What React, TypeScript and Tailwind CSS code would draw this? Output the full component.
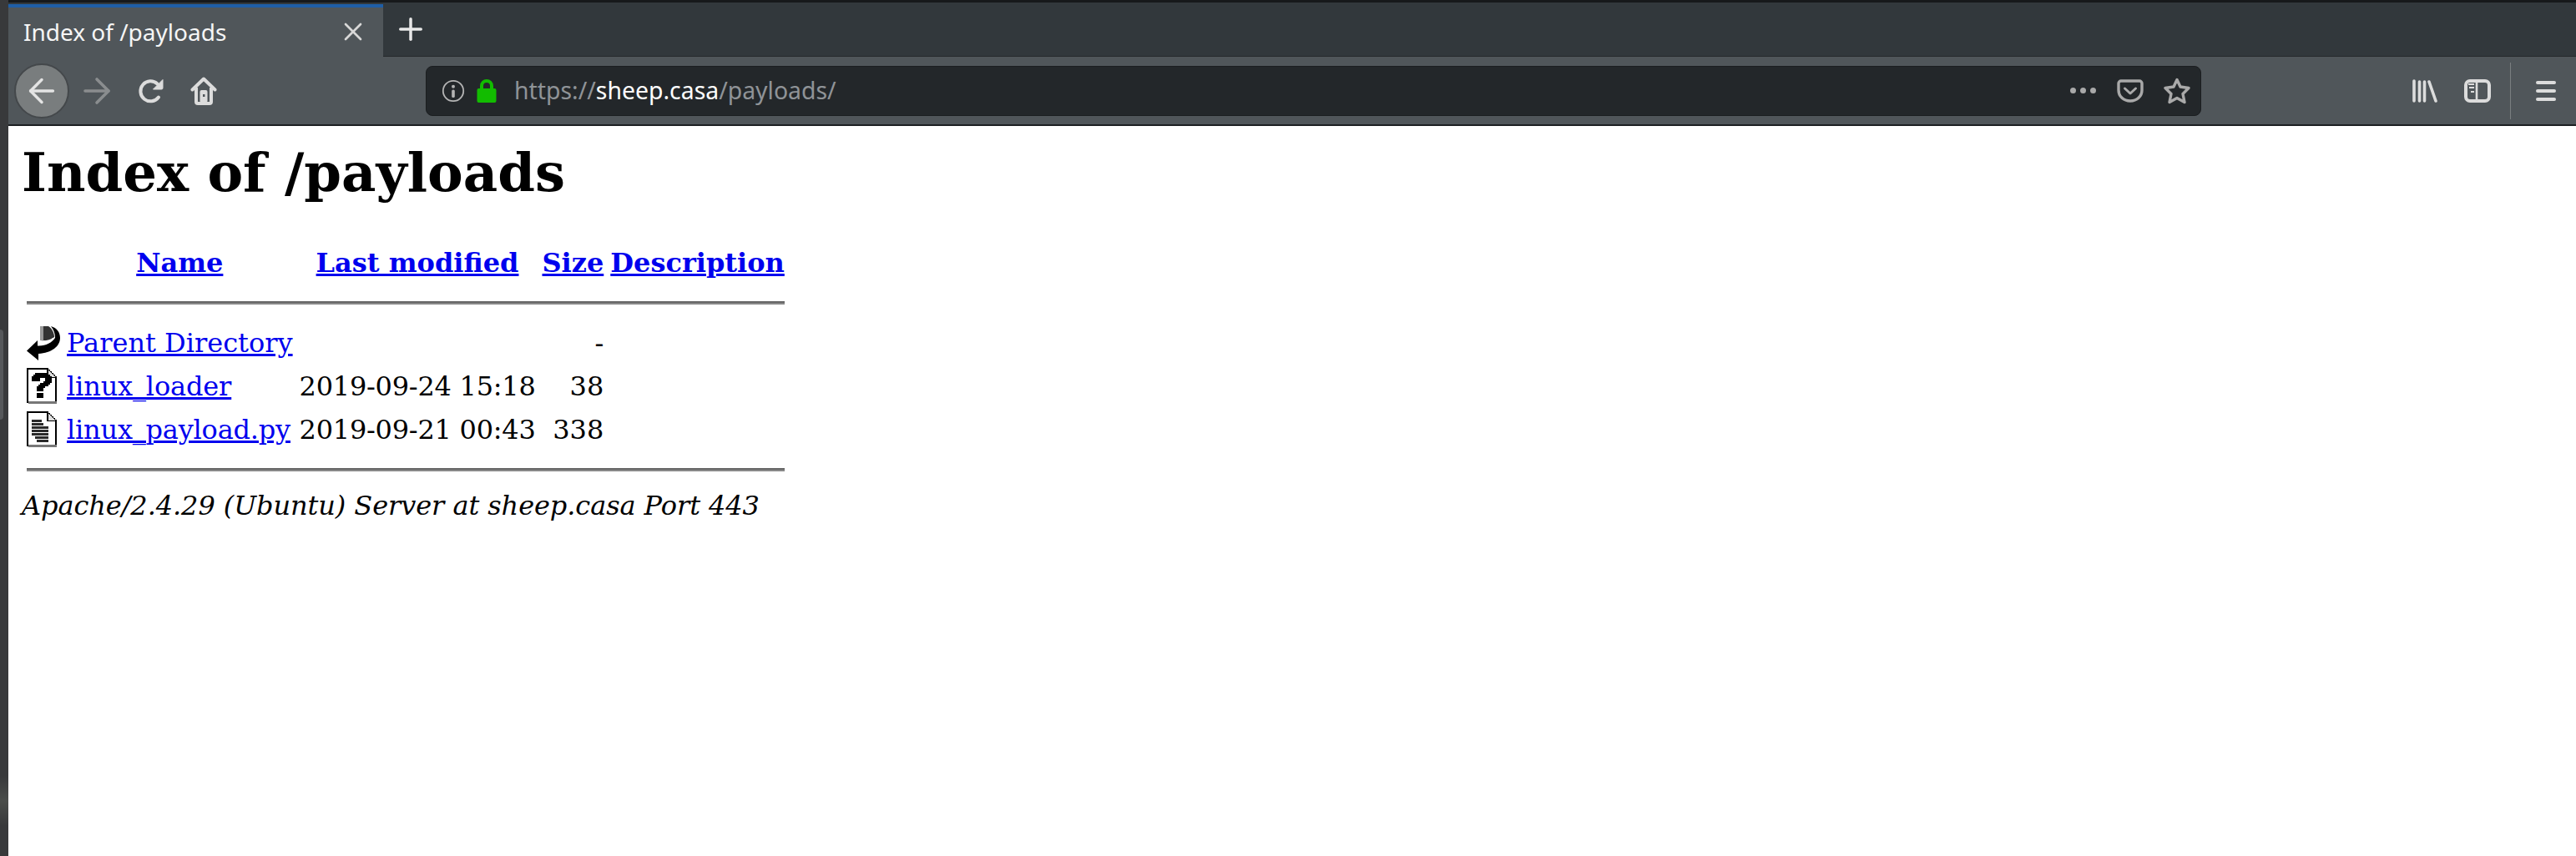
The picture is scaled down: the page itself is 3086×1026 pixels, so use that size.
import { ArrowLeft, ArrowRight, Plus, X } from 'lucide-react';

// Apache's stock directory icons, drawn on their 20x22 grid
const ParentIcon = () => (
  <svg width="40" height="44" viewBox="0 0 20 22" className="block">
    <path d="M0 15.7 6.500 9.500v3.200c4.500.3 8.500-1.700 10.500-4.700 0-3-1-5-2.500-7C18 2 20 4.500 20 8c0 5-5 9-13 9.500v4z" fill="#000" />
    <path d="M8 1h5c2 1 3.500 4 3.500 6.500-2.500 2-5.500 2.500-8.500 2z" fill="#333" />
    <path d="M8 1h2v8.500H8z" fill="#999" />
    <path d="M8 10c3 .4 6-.2 8.400-2" stroke="#fff" strokeWidth="0.800" strokeDasharray="1 0.800" fill="none" />
  </svg>
);

const UnknownIcon = () => (
  <svg width="40" height="44" viewBox="0 0 20 22" shapeRendering="crispEdges" className="block">
    <path d="M0 0h13v1h1v1h1v1h1v1h1v1h1v16H0z" fill="#000" />
    <path d="M1 1h11v5h5v14H1z" fill="#fff" />
    <path d="M13 1.500 17 5.500h-4z" fill="#ddd" />
    <path d="M3 6V5h1V4h1V3h8v1h1v1h1v4h-1v1h-1v1h-2v1h-1v2H6v-3h1v-1h1V9h2V8h1V6H8v2H3z" fill="#000" />
    <path d="M6 15h4v3H6z" fill="#000" />
    <path d="M1 20h17v1.500H1z" fill="#777" />
  </svg>
);

const TextIcon = () => (
  <svg width="40" height="44" viewBox="0 0 20 22" shapeRendering="crispEdges" className="block">
    <path d="M0 0h13v1h1v1h1v1h1v1h1v1h1v16H0z" fill="#000" />
    <path d="M1 1h11v5h5v14H1z" fill="#fff" />
    <path d="M13 1.500 17 5.500h-4z" fill="#ddd" />
    <path d="M3 5h6v1.500H3zM3 7h7v1.500H3zM3 9h10v1.500H3zM3 11h10v1.500H3zM3 13h10v1.500H3zM5 15h8v1.500H5zM6 17h7v1.500H6z" fill="#2a2a2a" />
    <path d="M1 20h17v1.500H1z" fill="#777" />
  </svg>
);

const ReloadIcon = () => (
  <svg width="32" height="32" viewBox="0 0 32 32" fill="none" className="block">
    <path d="M23.500 7.500A12 12 0 1 0 25 23.500" stroke="#dcdcdc" strokeWidth="4" strokeLinecap="round" />
    <path d="M30 2.500v10a1.500 1.500 0 0 1-1.500 1.500H18.500z" fill="#dcdcdc" stroke="#dcdcdc" strokeLinejoin="round" />
  </svg>
);

const HomeIcon = () => (
  <svg width="32" height="34" viewBox="0 0 32 34" fill="none" className="block">
    <path d="M2.500 15.500 16 2.500l13.500 13" stroke="#dcdcdc" strokeWidth="4" strokeLinecap="round" strokeLinejoin="round" />
    <path d="M7 13v17a2 2 0 0 0 2 2h14a2 2 0 0 0 2-2V13" stroke="#dcdcdc" strokeWidth="4" />
    <rect x="11.500" y="16" width="9" height="15" rx="2" fill="#dcdcdc" />
    <rect x="15" y="21" width="2.500" height="3" fill="#50565a" />
  </svg>
);

const InfoIcon = () => (
  <svg width="28" height="28" viewBox="0 0 28 28" fill="none" className="block">
    <circle cx="14" cy="14" r="12.200" stroke="#b4b4b4" strokeWidth="1.800" />
    <circle cx="14" cy="8.800" r="2" fill="#b4b4b4" />
    <rect x="12.200" y="12.400" width="3.600" height="9.600" rx="1.600" fill="#b4b4b4" />
  </svg>
);

const LockIcon = () => (
  <svg width="24" height="28" viewBox="0 0 24 28" fill="none" className="block">
    <path d="M6 12V8a6 6 0 0 1 12 0v4" stroke="#12bc00" strokeWidth="4" />
    <rect x="0.500" y="11" width="23" height="17" rx="2" fill="#12bc00" />
  </svg>
);

const PocketIcon = () => (
  <svg width="32" height="28" viewBox="0 0 32 28" fill="none" className="block">
    <path d="M2 5a3 3 0 0 1 3-3h22a3 3 0 0 1 3 3v8c0 7.500-6 13-14 13S2 20.500 2 13z" stroke="#a9a9a9" strokeWidth="3.400" strokeLinejoin="round" />
    <path d="m9.500 11 6.500 6 6.500-6" stroke="#a9a9a9" strokeWidth="3" strokeLinecap="round" strokeLinejoin="round" />
  </svg>
);

const StarIcon = () => (
  <svg width="32" height="32" viewBox="0 0 32 32" fill="none" className="block">
    <path d="M16 2.500 20 11l10 1.500-7 7 2 10-9-5-9 5 2-10-7-7L12 11z" stroke="#a9a9a9" strokeWidth="3.400" strokeLinejoin="round" />
  </svg>
);

const LibraryIcon = () => (
  <svg width="32" height="28" viewBox="0 0 32 28" fill="none" stroke="#dcdcdc" strokeWidth="3.600" strokeLinecap="round" className="block">
    <path d="M3 2v24M9.500 3v23M15.500 3v23M21 3l8 23" />
  </svg>
);

const SidebarIcon = () => (
  <svg width="32" height="28" viewBox="0 0 32 28" fill="none" className="block">
    <rect x="2" y="2" width="28" height="24" rx="5" stroke="#dcdcdc" strokeWidth="4" />
    <path d="M15 2v24" stroke="#dcdcdc" strokeWidth="2.600" />
    <path d="M5 5h7v2H5zM6 9h6v2H6zM8 14h4v2H8z" fill="#dcdcdc" />
  </svg>
);

const rows = [
  { icon: <ParentIcon />, name: 'Parent Directory', nameClass: 'text-[#0000ee] underline', modified: '', size: '-' },
  { icon: <UnknownIcon />, name: 'linux_loader', nameClass: 'text-[#0000ee] underline tracking-[-0.150px]', modified: '2019-09-24 15:18', size: '38' },
  { icon: <TextIcon />, name: 'linux_payload.py', nameClass: 'text-[#0000ee] underline tracking-[-0.200px]', modified: '2019-09-21 00:43', size: '338' },
];

const Rule = () => (
  <tr>
    <th colSpan={5} className="p-[2px] font-normal">
      <div className="my-[16px] h-1 border-t-2 border-[#666] bg-[#888]" />
    </th>
  </tr>
);

const App = () => {
  return (
    <div className="flex min-h-[1026px] bg-[#38393b]">
      {/* edge of the window behind */}
      <div className="w-[10px] shrink-0 pt-[395px]">
        <div className="h-[108px] w-1 rounded-r bg-[#55575a]" />
        <div className="mt-[427px] h-[60px] bg-gradient-to-b from-[#38393b] via-[#4a4d4a] to-[#38393b]" />
      </div>

      <div className="flex-1 min-w-0 bg-white">
        {/* browser chrome */}
        <div className="bg-[#32383c]">
          <div className="h-[3px] bg-[#17191b]" />
          <div className="flex h-[65px]">
            <div className="mt-[2px] w-[449px] bg-[#50565a] border-t-4 border-[#1f5ea6] flex items-center pl-[18px] pr-[18px] pb-[2px]">
              <span className="flex-1 text-[28px] text-[#f5f5f5] font-['Noto_Sans',sans-serif]">Index of /payloads</span>
              <X size={36} strokeWidth={1.8} className="text-[#d8d8d8]" />
            </div>
            <div className="flex-1 flex items-center border-b border-[#26292c] pl-[12px]">
              <Plus size={42} strokeWidth={2} className="text-[#e8e8e8]" />
            </div>
          </div>

          <div className="h-[83px] bg-[#50565a] border-b-2 border-b-[#1c1f21] flex items-center">
            <div className="ml-[7px] size-[66px] shrink-0 rounded-full bg-[#797d7e] border-2 border-[#44484b] flex items-center justify-center">
              <ArrowLeft size={46} strokeWidth={1.8} className="text-[#e4e4e4]" />
            </div>
            <ArrowRight size={48} strokeWidth={1.8} className="ml-[9px] shrink-0 text-[#8a8d8f]" />
            <div className="ml-[25px] shrink-0"><ReloadIcon /></div>
            <div className="ml-[31px] shrink-0"><HomeIcon /></div>

            <div className="ml-[250px] w-[2127px] shrink-0 h-[60px] rounded-lg bg-[#23272a] border border-[#1b1e20] flex items-center pl-[18px] pr-[12px]">
              <InfoIcon />
              <div className="ml-[14px]"><LockIcon /></div>
              <span className="ml-[21px] text-[28.400px] text-[#8f9397] font-['Noto_Sans',sans-serif]">
                https://<span className="text-white">sheep.casa</span>/payloads/
              </span>
              <div className="ml-auto flex items-center gap-[4.500px]">
                <span className="size-[7.500px] rounded-full bg-[#a9a9a9]" />
                <span className="size-[7.500px] rounded-full bg-[#a9a9a9]" />
                <span className="size-[7.500px] rounded-full bg-[#a9a9a9]" />
              </div>
              <div className="ml-[25px]"><PocketIcon /></div>
              <div className="ml-[24px]"><StarIcon /></div>
            </div>

            <div className="ml-[252px] shrink-0"><LibraryIcon /></div>
            <div className="ml-[31px] shrink-0"><SidebarIcon /></div>
            <div className="ml-[23px] w-px h-[68px] shrink-0 bg-[#7a7e80]" />
            <div className="ml-[30px] w-6 shrink-0 flex flex-col gap-[6px]">
              <span className="h-1 rounded-full bg-[#dcdcdc]" />
              <span className="h-1 rounded-full bg-[#dcdcdc]" />
              <span className="h-1 rounded-full bg-[#dcdcdc]" />
            </div>
          </div>
        </div>

        {/* directory listing */}
        <div className="pl-[16px] pt-[18px] font-['DejaVu_Serif',serif] text-[32px] leading-[38px] text-black">
          <h1 className="text-[64px] font-bold leading-[75px]">Index of /payloads</h1>

          <table className="mt-[46px] border-separate border-spacing-[4px]">
            <thead>
              <tr>
                <th className="p-[2px] pb-[5px]" />
                <th className="p-[2px] pb-[5px] font-bold"><a href="#" className="text-[#0000ee] underline">Name</a></th>
                <th className="p-[2px] pb-[5px] font-bold"><a href="#" className="text-[#0000ee] underline">Last modified</a></th>
                <th className="p-[2px] pb-[5px] font-bold"><a href="#" className="text-[#0000ee] underline">Size</a></th>
                <th className="p-[2px] pb-[5px] font-bold"><a href="#" className="text-[#0000ee] underline">Description</a></th>
              </tr>
              <Rule />
            </thead>
            <tbody>
              {rows.map((row) => (
                <tr key={row.name}>
                  <td className="p-[2px] align-middle">{row.icon}</td>
                  <td className="p-[2px]"><a href="#" className={row.nameClass}>{row.name}</a></td>
                  <td className="p-[2px] text-right tracking-[-0.250px]">{row.modified}</td>
                  <td className="p-[2px] text-right">{row.size}</td>
                  <td className="p-[2px]" />
                </tr>
              ))}
              <Rule />
            </tbody>
          </table>

          <p className="italic tracking-[-0.080px]">Apache/2.4.29 (Ubuntu) Server at sheep.casa Port 443</p>
        </div>
      </div>
    </div>
  );
};

export default App;
